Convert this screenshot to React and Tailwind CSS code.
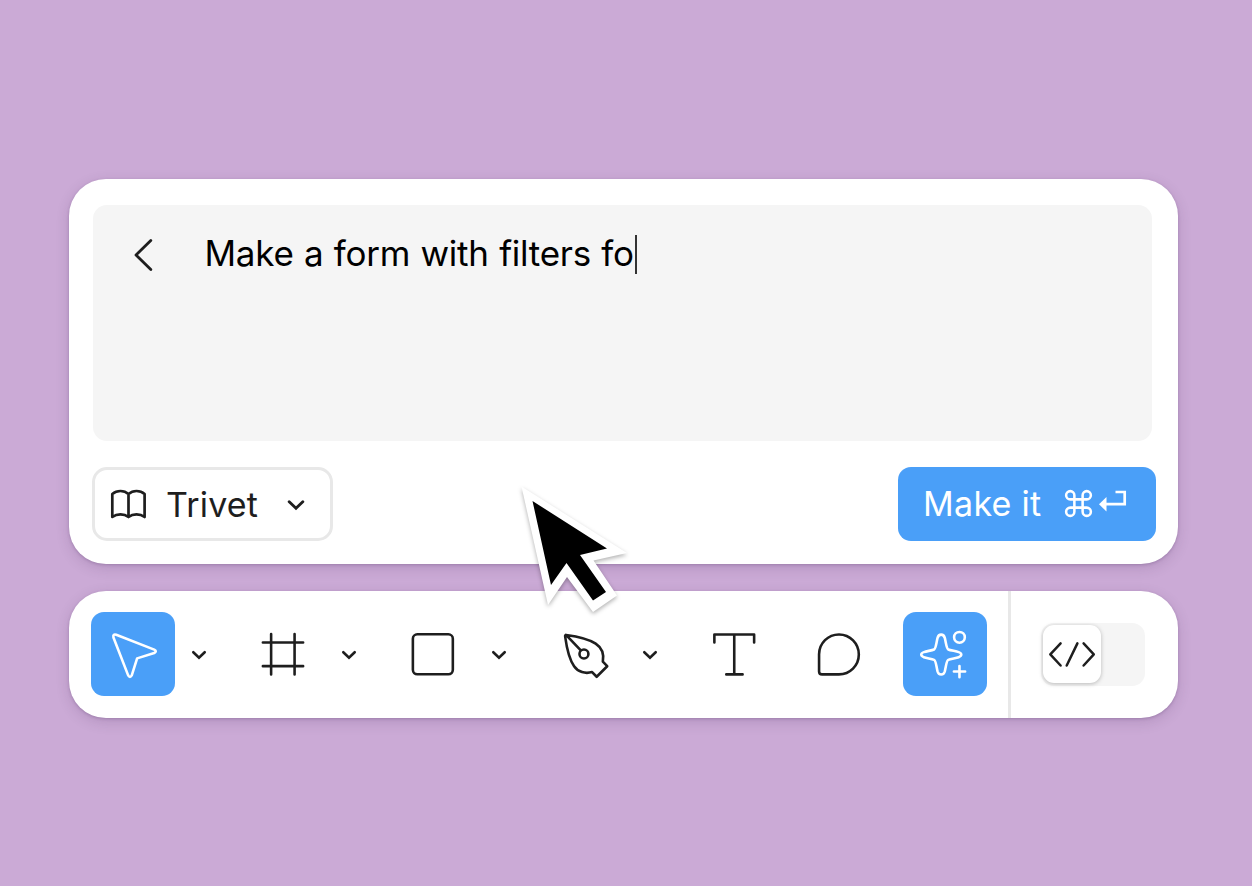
import React from 'react';
import { Command } from 'lucide-react';

const Chevron = () => (
  <svg className="w-12 h-[84px] shrink-0" viewBox="0 0 48 84" fill="none" stroke="#1e1e1e" strokeWidth="2.6" strokeLinecap="round" strokeLinejoin="miter">
    <path d="M18.3 40.2 L24 45.6 L29.7 40.2" />
  </svg>
);

const Tool = ({ active, label, children }) => (
  <button
    aria-label={label}
    className={`w-[84px] h-[84.5px] shrink-0 rounded-[13px] ${active ? 'bg-[#4a9ff8] text-white' : 'text-[#1e1e1e]'}`}
  >
    <svg className="w-full h-full" viewBox="0 0 84.5 84.5" fill="none" stroke="currentColor" strokeWidth="2.6" strokeLinecap="round" strokeLinejoin="round">
      {children}
    </svg>
  </button>
);

const ToolWithMenu = ({ active, label, children }) => (
  <div className="flex w-[150.2px] shrink-0">
    <Tool active={active} label={label}>{children}</Tool>
    <Chevron />
  </div>
);

const PromptPanel = () => (
  <div className="w-[1108.5px] h-[385.5px] rounded-[37px] bg-white pl-[24px] pr-[22px] pt-[26px] shadow-[0_4px_14px_rgba(60,30,80,0.16),0_1px_3px_rgba(60,30,80,0.22)]">
    <div className="flex w-[1058.5px] h-[236px] rounded-[14px] bg-[#f5f5f5]">
      <svg className="w-[112px] h-[100px] shrink-0" viewBox="0 0 112 100" fill="none" stroke="#1e1e1e" strokeWidth="2.8" strokeLinecap="round" strokeLinejoin="round">
        <path d="M57.8 35.5 L43 50 L57.8 64.5" />
      </svg>
      <div className="flex h-[38px] mt-[31px] items-center">
        <span className="text-[35px] leading-[38px] tracking-[-0.25px] [word-spacing:0.8px] whitespace-pre text-black -mt-[4px] -ml-[0.5px]">Make a form with filters fo</span>
        <span className="w-[2.5px] h-[39px] ml-[1px] bg-[#333]" />
      </div>
    </div>
    <div className="flex items-center justify-between mt-[26.5px]">
      <button className="flex items-center w-[241px] h-[74px] -ml-[1px] rounded-[15px] border-3 border-[#e8e8e8] text-[#1e1e1e]">
        <svg className="w-[71px] h-[68px] shrink-0" viewBox="0 0 71 68" fill="none" stroke="currentColor" strokeWidth="2.7" strokeLinejoin="round">
          <path d="M33.5 24 C29 20 22 20 17.3 24 V47 C22 43.5 29 43.5 33.5 47 C38 43.5 45 43.5 49.6 47 V24 C45 20 38 20 33.5 24 V47" />
        </svg>
        <span className="text-[34px] leading-[40px] tracking-[0.2px] mt-[2px]">Trivet</span>
        <svg className="w-6 h-6 ml-[26px] mt-[2px]" viewBox="0 0 24 24" fill="none" stroke="currentColor" strokeWidth="2.9" strokeLinecap="round">
          <path d="M5.2 8.8 L12 15.2 L18.8 8.8" />
        </svg>
      </button>
      <button className="flex items-center w-[257.5px] h-[74px] pl-[25px] rounded-[13px] bg-[#4a9ff8] text-white">
        <span className="text-[34px] leading-[40px] tracking-[0.3px] w-[139px] -mt-px text-left whitespace-nowrap">Make it</span>
        <Command size={33} strokeWidth={1.85} className="shrink-0 -mt-[2px]" />
        <svg className="w-[32px] h-[32px] shrink-0" viewBox="0 0 32 32">
          <path d="M10 16.2 H29.7 V4 H20.5" fill="none" stroke="currentColor" strokeWidth="2.7" />
          <path d="M4 16.2 L11.5 9 V23.6 Z" fill="currentColor" />
        </svg>
      </button>
    </div>
  </div>
);

const Toolbar = () => (
  <div className="flex items-center w-[1108.5px] h-[127px] mt-[26.5px] pl-[22px] rounded-[37px] bg-white shadow-[0_4px_14px_rgba(60,30,80,0.16),0_1px_3px_rgba(60,30,80,0.22)]">
    <ToolWithMenu active label="Move">
      <path d="M25.4 22.6 L63.6 37.6 Q66.8 39.3 63.6 41 L46.4 46.4 L41 63.5 Q39.2 66.5 37.4 63.5 L22.6 25.4 Q21.8 21.6 25.4 22.6 Z" />
    </ToolWithMenu>
    <ToolWithMenu label="Frame">
      <path d="M30.3 22 V62.5 M53.9 22 V62.5 M22 30.4 H62.5 M22 54.2 H62.5" />
    </ToolWithMenu>
    <ToolWithMenu label="Rectangle">
      <rect x="22" y="22.2" width="40.2" height="40.2" rx="4.5" />
    </ToolWithMenu>
    <ToolWithMenu label="Pen">
      <path d="M24.2 22.8 C37 24.5 48 27.5 54 31.5 C60 35.5 62.6 42 61.2 49.7 L65.6 54.3 L55 64.9 L50.4 60.2 C43.5 62.2 36.3 60.2 32.3 54.3 C27.5 47.5 25 37 23.3 24.5 Q23 22.5 24.6 23.3 L38.8 38.2" />
      <circle cx="42.2" cy="42" r="4.5" />
    </ToolWithMenu>
    <div className="flex gap-[21.2px] ml-[0.4px]">
      <Tool label="Text">
        <path d="M22.5 30.5 V22.3 H62.5 V30.5 M42.5 22.3 V62.5 M34.5 62.5 H50.9" />
      </Tool>
      <Tool label="Comment">
        <path d="M22.2 42.2 A20 20.1 0 1 1 42.2 62.5 H25.2 Q22.2 62.5 22.2 59.5 Z" />
      </Tool>
      <Tool active label="Make">
        <path d="M38.4 22.5 C40.5 22.5 41.6 24 42.1 26 C43.8 34 43.9 36.8 45.5 37.4 C48 38.4 53 39.1 56 40.1 C59.5 41.2 59.5 44 56 45.2 C53 46.2 48 46.9 45.5 47.9 C43.9 48.5 43.8 51.3 42.1 59.3 C41.6 61.3 40.5 62.6 38.4 62.6 C36.3 62.6 35.2 61.3 34.7 59.3 C33 51.3 32.9 48.5 31.3 47.9 C28.8 46.9 24 46.2 21 45.2 C17.5 44 17.5 41.2 21 40.1 C24 39.1 28.8 38.4 31.3 37.4 C32.9 36.8 33 34 34.7 26 C35.2 24 36.3 22.5 38.4 22.5 Z" />
        <circle cx="56.8" cy="25.2" r="5.4" />
        <path d="M56.8 54 V65.3 M51.2 59.6 H62.5" />
      </Tool>
    </div>
    <div className="w-[2.5px] h-full ml-[21.8px] bg-[#e8e8e8]" />
    <div className="flex items-center w-[103.5px] h-[63px] ml-[30.5px] pl-[1.3px] rounded-[13px] bg-[#f5f5f5]">
      <div className="w-[58px] h-[58px] -mt-px rounded-[11px] bg-white shadow-[0_1px_4px_rgba(0,0,0,0.25)]">
        <svg className="w-full h-full" viewBox="0 0 58 58" fill="none" stroke="#1e1e1e" strokeWidth="2.5" strokeLinecap="round" strokeLinejoin="round">
          <path d="M17.6 18.4 L7.3 29.3 L17.6 40.5 M34.4 18.4 L23.7 40.5 M40.6 18.4 L50.8 29.3 L40.6 40.5" />
        </svg>
      </div>
    </div>
  </div>
);

const Pointer = () => (
  <svg className="absolute left-[510px] top-[476px] w-[130px] h-[150px] drop-shadow-[0_2px_2px_rgba(0,0,0,0.3)]" viewBox="510 476 130 150">
    <path d="M521.5 486.5 L627 553 L593.5 560.5 L617 595.5 L593 612 L567 577 L548 605 Z" fill="white" />
    <path d="M532.5 501 L607 548.5 L580 555 L606 592 L593 600.5 L566.5 563 L551 585 Z" fill="black" />
  </svg>
);

export default function App() {
  return (
    <div className="relative w-[1252px] h-[886px] overflow-hidden bg-[#cbaad6] pl-[69px] pt-[178.5px] font-['Inter',sans-serif]">
      <PromptPanel />
      <Toolbar />
      <Pointer />
    </div>
  );
}
